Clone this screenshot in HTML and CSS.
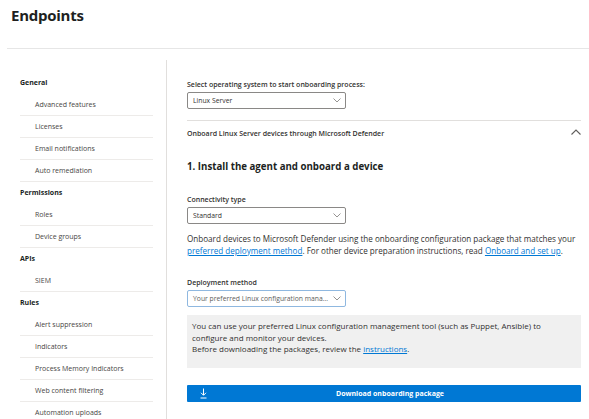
FILE: index.html
```html
<!DOCTYPE html>
<html>
<head>
<meta charset="utf-8">
<link rel="stylesheet" href="styles.css">
</head>
<body>
<header class="top">
  <h1 class="title">Endpoints</h1>
</header>
<div class="divider"></div>
<div class="layout">
  <nav class="sidebar">
    <div class="group">General</div>
    <div class="item">Advanced features</div>
    <div class="item">Licenses</div>
    <div class="item">Email notifications</div>
    <div class="item">Auto remediation</div>
    <div class="group">Permissions</div>
    <div class="item">Roles</div>
    <div class="item">Device groups</div>
    <div class="group">APIs</div>
    <div class="item">SIEM</div>
    <div class="group">Rules</div>
    <div class="item">Alert suppression</div>
    <div class="item">Indicators</div>
    <div class="item">Process Memory Indicators</div>
    <div class="item">Web content filtering</div>
    <div class="item">Automation uploads</div>
  </nav>
  <main class="main">
    <div class="label label-os">Select operating system to start onboarding process:</div>
    <div class="select">
      <span class="select-text">Linux Server</span>
      <svg class="chev" width="8" height="5" viewBox="0 0 8 5"><path d="M0.5 0.5 L4 4 L7.5 0.5" fill="none" stroke="#8a8886" stroke-width="0.9"/></svg>
    </div>
    <div class="accordion">
      <span>Onboard Linux Server devices through Microsoft Defender</span>
      <svg class="chev-up" width="10" height="6" viewBox="0 0 10 6"><path d="M0.5 5.5 L5 1 L9.5 5.5" fill="none" stroke="#605e5c" stroke-width="1.1"/></svg>
    </div>
    <h2 class="heading">1. Install the agent and onboard a device</h2>
    <div class="label label-conn">Connectivity type</div>
    <div class="select">
      <span class="select-text">Standard</span>
      <svg class="chev" width="8" height="5" viewBox="0 0 8 5"><path d="M0.5 0.5 L4 4 L7.5 0.5" fill="none" stroke="#8a8886" stroke-width="0.9"/></svg>
    </div>
    <p class="para">Onboard devices to Microsoft Defender using the onboarding configuration package that matches your <a class="link" href="#">preferred deployment method</a>. For other device preparation instructions, read <a class="link" href="#">Onboard and set up</a>.</p>
    <div class="label label-dep">Deployment method</div>
    <div class="select select-focus">
      <span class="select-text muted">Your preferred Linux configuration mana...</span>
      <svg class="chev" width="8" height="5" viewBox="0 0 8 5"><path d="M0.5 0.5 L4 4 L7.5 0.5" fill="none" stroke="#8a8886" stroke-width="0.9"/></svg>
    </div>
    <div class="info">
      You can use your preferred Linux configuration management tool (such as Puppet, Ansible) to<br>
      configure and monitor your devices.<br>
      Before downloading the packages, review the <a class="link" href="#">instructions</a>.
    </div>
    <button class="download">
      <svg class="dl-icon" width="7" height="11" viewBox="0 0 7 11"><path d="M3.5 0.5 V7 M1 4.8 L3.5 7.3 L6 4.8 M0.5 10 H6.5" fill="none" stroke="#ffffff" stroke-width="1"/></svg>
      <span class="dl-text">Download onboarding package</span>
    </button>
  </main>
</div>
</body>
</html>
```

FILE: styles.css
```css
* { box-sizing: border-box; }
html, body { margin: 0; padding: 0; background: #ffffff; }
body {
  font-family: "Open Sans", "Noto Sans", sans-serif;
  color: #323130;
  width: 589px;
  height: 419px;
  overflow: hidden;
}
.top { padding: 4px 11px 0 11px; height: 48px; }
.title {
  margin: 0;
  font-size: 15px;
  font-weight: 700;
  letter-spacing: -0.25px;
  line-height: 22px;
  color: #201f1e;
}
.divider { margin-left: 7px; border-top: 1px solid #e6e6e6; }
.layout { display: flex; margin-top: 11px; }
.sidebar {
  width: 167px;
  flex: none;
  border-right: 1px solid #e1dfdd;
  padding: 12px 13px 0 20px;
  height: 360px;
}
.group {
  height: 22px;
  line-height: 22px;
  font-size: 7px;
  font-weight: 700;
  color: #201f1e;
}
.item {
  height: 22px;
  line-height: 21px;
  padding-left: 15px;
  font-size: 7px;
  color: #484644;
  border-bottom: 1px solid #edebe9;
}
.main { flex: 1; padding: 19px 8px 0 20px; }
.label {
  font-size: 7px;
  line-height: 12px;
  font-weight: 600;
  color: #323130;
}
.select {
  width: 159px;
  height: 17px;
  border: 1px solid #8a8886;
  border-radius: 2px;
  display: flex;
  align-items: center;
  justify-content: space-between;
  padding: 0 4px 0 5px;
  margin-top: 1px;
}
.select-focus { border-color: #8fb8e0; }
.select-text { font-size: 6.8px; color: #323130; white-space: nowrap; }
.muted { color: #605e5c; }
.chev { flex: none; }
.accordion {
  margin-top: 11px;
  border-top: 1px solid #e1dfdd;
  height: 25px;
  display: flex;
  align-items: center;
  justify-content: space-between;
  font-size: 7px;
  font-weight: 600;
  color: #323130;
}
.chev-up { margin-right: 0; margin-bottom: 2px; }
.heading {
  margin: 15px 0 0 0;
  font-size: 9.7px;
  line-height: 14px;
  font-weight: 700;
  color: #201f1e;
}
.label-conn { margin-top: 20px; }
.para {
  margin: 9px 0 0 0;
  font-size: 8.1px;
  line-height: 11.5px;
  color: #323130;
}
.link { color: #0078d4; text-decoration: underline; }
.label-dep { margin-top: 21px; }
.info {
  margin-top: 8px;
  background: #f0f0f0;
  height: 53px;
  padding: 5px 5px 0 5px;
  font-size: 8px;
  line-height: 11.5px;
  color: #323130;
}
.download {
  margin-top: 17px;
  width: 100%;
  height: 17px;
  background: #0078d4;
  border: none;
  border-radius: 1px;
  display: flex;
  align-items: center;
  padding: 0 0 0 13px;
  font-family: inherit;
}
.dl-icon { flex: none; }
.dl-text {
  flex: 1;
  text-align: center;
  font-size: 7px;
  font-weight: 700;
  color: #ffffff;
  margin-right: 8px;
}
```
